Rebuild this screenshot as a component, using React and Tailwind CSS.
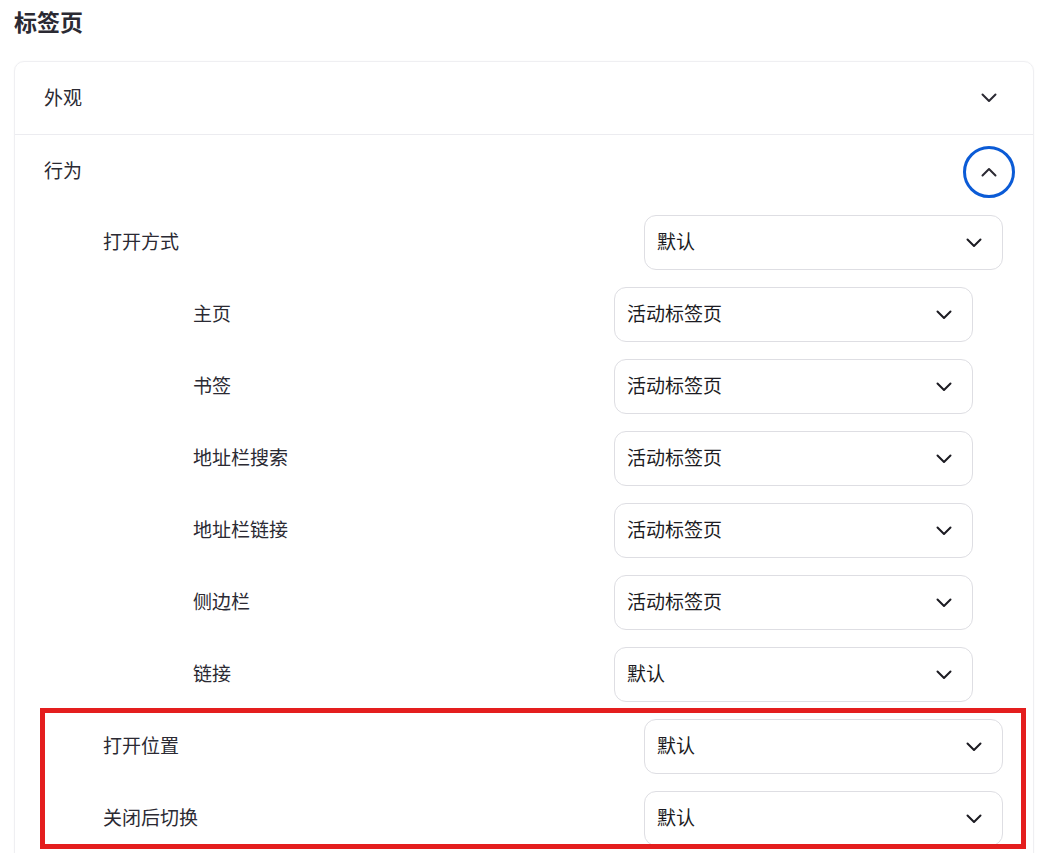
import React from 'react';

const FONT = { fontFamily: '"Noto Sans", "Noto Sans CJK SC", sans-serif' };

// ─── Data ─────────────────────────────────────────────────────────────────────
const ROWS = [
  { label: '打开方式', value: '默认', level: 1 },
  { label: '主页', value: '活动标签页', level: 2 },
  { label: '书签', value: '活动标签页', level: 2 },
  { label: '地址栏搜索', value: '活动标签页', level: 2 },
  { label: '地址栏链接', value: '活动标签页', level: 2 },
  { label: '侧边栏', value: '活动标签页', level: 2 },
  { label: '链接', value: '默认', level: 2 },
  { label: '打开位置', value: '默认', level: 1 },
  { label: '关闭后切换', value: '默认', level: 1 },
];

// ─── Icons ────────────────────────────────────────────────────────────────────
function Chevron({ up = false, className = '' }) {
  return (
    <svg width="16" height="16" viewBox="0 0 16 16" fill="none" className={className}>
      <path
        d={up ? 'M1.5 11.5 L8 5 L14.5 11.5' : 'M1.5 4.5 L8 11 L14.5 4.5'}
        stroke="currentColor"
        strokeWidth="2"
        strokeLinecap="round"
        strokeLinejoin="round"
      />
    </svg>
  );
}

// ─── Sub-components ───────────────────────────────────────────────────────────
function SectionHeader({ label, open, focused, bordered }) {
  return (
    <div className={`flex items-center justify-between h-[73px] pl-[29px] pr-[18px] ${bordered ? 'border-b border-[#ececf0]' : ''}`}>
      <span className="text-[19px] text-[#2b2a33]">{label}</span>
      <button
        className={`w-[52px] h-[52px] rounded-full flex items-center justify-center text-[#2b2a33] ${focused ? 'border-[3px] border-[#0b5bd6]' : ''}`}
      >
        <Chevron up={open} />
      </button>
    </div>
  );
}

function SelectRow({ label, value, level }) {
  const nested = level === 2;
  return (
    <div className={`flex items-center justify-between h-[55px] mb-[17px] ${nested ? 'pl-[178px] pr-[60px]' : 'pl-[88px] pr-[30px]'}`}>
      <span className="text-[19px] text-[#2b2a33]">{label}</span>
      <div className="w-[359px] h-[55px] rounded-[12px] border border-[#dedee3] bg-white flex items-center justify-between pl-[12px] pr-[20px]">
        <span className="text-[19px] text-[#1c1b22]">{value}</span>
        <Chevron className="text-[#1c1b22]" />
      </div>
    </div>
  );
}

// ─── Page ─────────────────────────────────────────────────────────────────────
export default function App() {
  return (
    <div className="relative h-[853px] overflow-hidden bg-white px-[14px]" style={FONT}>
      <h1 className="text-[23px] font-bold text-[#2b2a33] leading-[32px] pt-[6px]">标签页</h1>

      <div className="mt-[23px] w-[1020px] rounded-[10px] border border-[#efeff2] shadow-[0_0_2px_rgba(0,0,0,0.04)]">
        <SectionHeader label="外观" open={false} bordered />
        <SectionHeader label="行为" open focused />
        <div className="pt-[7px]">
          {ROWS.map((r) => (
            <SelectRow key={r.label} {...r} />
          ))}
        </div>
      </div>

      {/* Annotation highlight */}
      <div className="absolute left-[40px] top-[708px] w-[986px] h-[141px] border-[5px] border-[#e41e1e] pointer-events-none" />
    </div>
  );
}
